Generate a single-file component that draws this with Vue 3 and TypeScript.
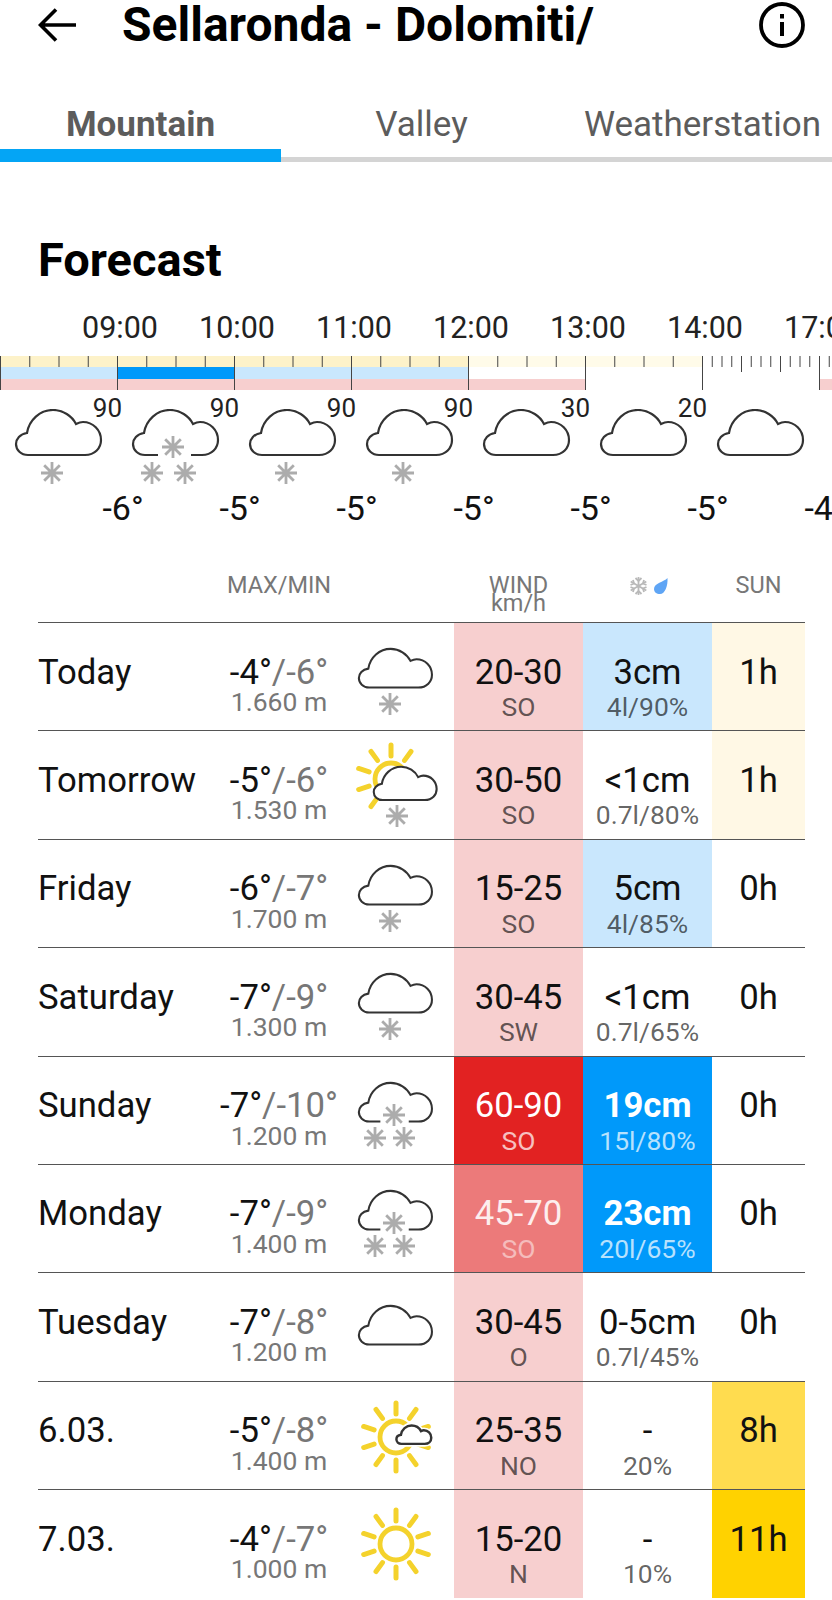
<script setup lang="ts">
type Icon = "snow" | "sun-snow" | "heavy" | "cloud" | "sun-cloud" | "sun";

interface Row {
  day: string;
  max: string;
  min: string;
  alt: string;
  icon: Icon;
  wind: string;
  dir: string;
  windClass: string;
  snow: string;
  rain: string;
  snowClass: string;
  sun: string;
  sunClass: string;
}

const HOUR = 117;

const hours = ["09:00", "10:00", "11:00", "12:00", "13:00", "14:00", "17:00"];
const temps = ["-6°", "-5°", "-5°", "-5°", "-5°", "-5°", "-4°"];
const slots = [
  { pct: "90", flakes: 1 },
  { pct: "90", flakes: 3 },
  { pct: "90", flakes: 1 },
  { pct: "90", flakes: 1 },
  { pct: "30", flakes: 0 },
  { pct: "20", flakes: 0 },
  { pct: "", flakes: 0 },
];

const majors = [0, 1, 2, 3, 4, 5, 6, 7].map((i) => i * HOUR);
const minors: number[] = [];
for (let i = 0; i < 6; i++) {
  for (let k = 1; k < 4; k++) minors.push(i * HOUR + (k * HOUR) / 4);
}
const fine: { x: number; long: boolean }[] = [];
for (let k = 1; k < 14; k++) {
  if (k !== 12) fine.push({ x: 6 * HOUR + (k * HOUR) / 12, long: k % 4 === 0 });
}

function ray(a: number) {
  const r = (a * Math.PI) / 180;
  return {
    x1: 23 * Math.cos(r),
    y1: -23 * Math.sin(r),
    x2: 34 * Math.cos(r),
    y2: -34 * Math.sin(r),
  };
}
const rays = [90, 54, 18, -18, -54, -90, -126, -162, 162, 126].map(ray);
// only the rays that stick out from behind the big cloud
const upperRays = [90, 54, 162, 126, -162, -126].map(ray);

const rows: Row[] = [
  { day: "Today", max: "-4°", min: "-6°", alt: "1.660 m", icon: "snow", wind: "20-30", dir: "SO", windClass: "w-low", snow: "3cm", rain: "4l/90%", snowClass: "s-low", sun: "1h", sunClass: "sun-low" },
  { day: "Tomorrow", max: "-5°", min: "-6°", alt: "1.530 m", icon: "sun-snow", wind: "30-50", dir: "SO", windClass: "w-low", snow: "<1cm", rain: "0.7l/80%", snowClass: "", sun: "1h", sunClass: "sun-low" },
  { day: "Friday", max: "-6°", min: "-7°", alt: "1.700 m", icon: "snow", wind: "15-25", dir: "SO", windClass: "w-low", snow: "5cm", rain: "4l/85%", snowClass: "s-low", sun: "0h", sunClass: "" },
  { day: "Saturday", max: "-7°", min: "-9°", alt: "1.300 m", icon: "snow", wind: "30-45", dir: "SW", windClass: "w-low", snow: "<1cm", rain: "0.7l/65%", snowClass: "", sun: "0h", sunClass: "" },
  { day: "Sunday", max: "-7°", min: "-10°", alt: "1.200 m", icon: "heavy", wind: "60-90", dir: "SO", windClass: "w-high", snow: "19cm", rain: "15l/80%", snowClass: "s-high", sun: "0h", sunClass: "" },
  { day: "Monday", max: "-7°", min: "-9°", alt: "1.400 m", icon: "heavy", wind: "45-70", dir: "SO", windClass: "w-mid", snow: "23cm", rain: "20l/65%", snowClass: "s-high", sun: "0h", sunClass: "" },
  { day: "Tuesday", max: "-7°", min: "-8°", alt: "1.200 m", icon: "cloud", wind: "30-45", dir: "O", windClass: "w-low", snow: "0-5cm", rain: "0.7l/45%", snowClass: "", sun: "0h", sunClass: "" },
  { day: "6.03.", max: "-5°", min: "-8°", alt: "1.400 m", icon: "sun-cloud", wind: "25-35", dir: "NO", windClass: "w-low", snow: "-", rain: "20%", snowClass: "", sun: "8h", sunClass: "sun-mid" },
  { day: "7.03.", max: "-4°", min: "-7°", alt: "1.000 m", icon: "sun", wind: "15-20", dir: "N", windClass: "w-low", snow: "-", rain: "10%", snowClass: "", sun: "11h", sunClass: "sun-high" },
];
</script>

<template>
  <div class="page">
    <svg class="defs" width="0" height="0" aria-hidden="true">
      <defs>
        <path id="cloud" d="M13 46H70C80 46 86 39 86 31C86 21 78 13 68 13C65 13 63 14 61 15C57 7 48 1 38 1C25 1 14 11 12 24C5 25 1 30 1 35C1 41 6 46 13 46Z" />
        <path id="cloud-gap" d="M26 46H13C6 46 1 41 1 35C1 30 5 25 12 24C14 11 25 1 38 1C48 1 57 7 61 15C63 14 65 13 68 13C78 13 86 21 86 31C86 39 80 46 70 46H59" fill="none" />
        <path id="flake" d="M0-11V11M-11 0H11M-7.8-7.8L7.800 7.800M-7.8 7.800L7.800-7.800" fill="none" stroke="#acacac" stroke-width="2.800" />
        <g id="sun-full" fill="none" stroke="#f4d22c" stroke-width="5" stroke-linecap="round">
          <line v-for="(r, i) in rays" :key="i" :x1="r.x1" :y1="r.y1" :x2="r.x2" :y2="r.y2" />
          <circle r="16" stroke-width="4.800" />
        </g>
        <g id="sun-back" fill="none" stroke="#f4d22c" stroke-width="5" stroke-linecap="round">
          <line v-for="(r, i) in upperRays" :key="i" :x1="r.x1" :y1="r.y1" :x2="r.x2" :y2="r.y2" />
          <circle r="16" stroke-width="4.800" />
        </g>
      </defs>
    </svg>

    <header class="topbar">
      <svg class="back" width="38" height="34" viewBox="0 0 38 34" fill="none" stroke="#000" stroke-width="3.600">
        <path d="M38 17H3M18 1.500L2.500 17L18 32.500" />
      </svg>
      <h1 class="title">Sellaronda - Dolomiti/</h1>
      <svg class="info" width="46" height="46" viewBox="0 0 46 46">
        <circle cx="23" cy="23" r="21" fill="none" stroke="#000" stroke-width="3.800" />
        <rect x="21" y="20" width="4" height="14" />
        <rect x="21" y="12" width="4" height="4.500" />
      </svg>
    </header>

    <nav class="tabs">
      <div class="tab active">Mountain</div>
      <div class="tab">Valley</div>
      <div class="tab">Weatherstation</div>
    </nav>

    <h2 class="heading">Forecast</h2>

    <div class="hour-labels">
      <span v-for="h in hours" :key="h" class="hour">{{ h }}</span>
    </div>

    <svg class="ruler" width="832" height="34" viewBox="0 0 832 34">
      <rect x="0" y="0" width="468" height="11" fill="#fdf2c9" />
      <rect x="468" y="0" width="234" height="11" fill="#fffbe9" />
      <rect x="0" y="11" width="468" height="12" fill="#c9e7fd" />
      <rect x="117" y="11" width="117" height="12" fill="#0099fa" />
      <rect x="0" y="23" width="585" height="11" fill="#f7cfcf" />
      <rect x="819" y="23" width="13" height="11" fill="#f7cfcf" />
      <g stroke="#444" stroke-width="1">
        <line v-for="x in minors" :key="x" :x1="x + 0.5" y1="0" :x2="x + 0.5" y2="11" />
        <line v-for="f in fine" :key="f.x" :x1="f.x + 0.5" y1="0" :x2="f.x + 0.5" :y2="f.long ? 16 : 11" />
        <line v-for="x in majors" :key="x" :x1="x + 0.5" y1="0" :x2="x + 0.5" y2="34" />
      </g>
    </svg>

    <div class="slots">
      <div v-for="(s, i) in slots" :key="i" class="slot">
        <span class="pct">{{ s.pct }}</span>
        <svg width="117" height="76" viewBox="0 0 117 76">
          <g transform="translate(12 0)">
            <use :href="s.flakes === 3 ? '#cloud-gap' : '#cloud'" fill="none" stroke="#333" stroke-width="2.200" />
            <template v-if="s.flakes === 1">
              <use href="#flake" transform="translate(37 64)" />
            </template>
            <template v-if="s.flakes === 3">
              <use href="#flake" transform="translate(41 38)" />
              <use href="#flake" transform="translate(20 64)" />
              <use href="#flake" transform="translate(53 64)" />
            </template>
          </g>
        </svg>
      </div>
    </div>

    <div class="temps">
      <span v-for="(t, i) in temps" :key="i" class="temp">{{ t }}</span>
    </div>

    <div class="grid head">
      <div></div>
      <div class="head-cell">MAX/MIN</div>
      <div></div>
      <div class="head-cell wind-head">
        <div>WIND</div>
        <div>km/h</div>
      </div>
      <div class="head-cell">
        <svg width="50" height="22" viewBox="0 0 50 22">
          <g transform="translate(15.500 12)" fill="none" stroke="#b9b9b9" stroke-width="1.800">
            <path d="M0-9V9M-7.800-4.500L7.800 4.500M-7.800 4.500L7.800-4.500" />
            <path d="M-3-8L0-5L3-8M-3 8L0 5L3 8M-8-1L-4.500-2.500L-5.500-6M8-1L4.500-2.500L5.500-6M-8 1L-4.500 2.500L-5.500 6M8 1L4.500 2.500L5.500 6" />
          </g>
          <path d="M44.500 4C41 8 31 9 31 15C31 18 33.500 20 37 20C42 20 45 12 44.500 4Z" fill="#5fa5f5" />
        </svg>
      </div>
      <div class="head-cell">SUN</div>
    </div>

    <div v-for="r in rows" :key="r.day" class="grid row">
      <div class="cell day">{{ r.day }}</div>
      <div class="cell center">
        <div class="big">{{ r.max }}<span class="min">/{{ r.min }}</span></div>
        <div class="alt">{{ r.alt }}</div>
      </div>
      <div class="icon-cell">
        <svg width="99" height="107" viewBox="0 0 99 107">
          <template v-if="r.icon === 'snow'">
            <use href="#cloud" transform="translate(3 25) scale(.86)" fill="none" stroke="#333" stroke-width="2.400" />
            <use href="#flake" transform="translate(35 81)" />
          </template>
          <template v-if="r.icon === 'sun-snow'">
            <use href="#sun-back" transform="translate(36 48)" />
            <use href="#cloud" transform="translate(18 35) scale(.74)" fill="#fff" stroke="#333" stroke-width="2.800" />
            <use href="#flake" transform="translate(42 85)" />
          </template>
          <template v-if="r.icon === 'heavy'">
            <use href="#cloud-gap" transform="translate(3 25) scale(.86)" stroke="#333" stroke-width="2.400" />
            <use href="#flake" transform="translate(39 58)" />
            <use href="#flake" transform="translate(20 81)" />
            <use href="#flake" transform="translate(49 81)" />
          </template>
          <use v-if="r.icon === 'cloud'" href="#cloud" transform="translate(3 32) scale(.86)" fill="none" stroke="#333" stroke-width="2.400" />
          <template v-if="r.icon === 'sun-cloud'">
            <use href="#sun-full" transform="translate(41 55)" />
            <use href="#cloud" transform="translate(41 43) scale(.41)" fill="#fff" stroke="#fff" stroke-width="14" />
            <use href="#cloud" transform="translate(41 43) scale(.41)" fill="#fff" stroke="#333" stroke-width="6" />
          </template>
          <use v-if="r.icon === 'sun'" href="#sun-full" transform="translate(41 54)" />
        </svg>
      </div>
      <div class="cell center" :class="r.windClass">
        <div class="big">{{ r.wind }}</div>
        <div class="sub">{{ r.dir }}</div>
      </div>
      <div class="cell center" :class="r.snowClass">
        <div class="big">{{ r.snow }}</div>
        <div class="sub">{{ r.rain }}</div>
      </div>
      <div class="cell center" :class="r.sunClass">
        <div class="big">{{ r.sun }}</div>
      </div>
    </div>
  </div>
</template>

<style>
html,
body {
  margin: 0;
  background: #fff;
}
</style>

<style scoped>
.page {
  position: relative;
  width: 832px;
  height: 1600px;
  overflow: hidden;
  font-family: Roboto, "Liberation Sans", sans-serif;
  color: #111;
  background: #fff;
}
.defs {
  position: absolute;
}
.topbar {
  display: flex;
  align-items: center;
  height: 50px;
  padding: 0 27px 0 38px;
}
.back {
  flex: none;
  margin-right: 46px;
}
.title {
  flex: 1;
  margin: 0;
  font-size: 48px;
  line-height: 50px;
  font-weight: 700;
  color: #000;
  white-space: nowrap;
}
.tabs {
  display: flex;
  width: 843px;
  height: 112px;
}
.tab {
  flex: 1;
  box-sizing: border-box;
  padding-top: 55px;
  border-bottom: 5px solid #d4d4d4;
  font-size: 35px;
  line-height: 40px;
  text-align: center;
  color: #5c5c5c;
  white-space: nowrap;
}
.tab.active {
  border-bottom: 13px solid #04a5f5;
  font-weight: 700;
}
.heading {
  margin: 0;
  padding: 73px 0 0 38px;
  font-size: 47px;
  line-height: 50px;
  font-weight: 700;
  color: #000;
}
.hour-labels {
  display: flex;
  margin-top: 25px;
  padding-left: 61.5px;
}
.hour,
.temp {
  flex: none;
  width: 117px;
  text-align: center;
  line-height: 36px;
}
.hour {
  font-size: 30.5px;
  color: #222;
}
.ruler {
  display: block;
  margin-top: 10px;
}
.slots {
  display: flex;
  padding-left: 3px;
}
.slot {
  position: relative;
  flex: none;
  width: 117px;
  padding-top: 19px;
}
.slot svg {
  display: block;
}
.pct {
  position: absolute;
  top: 5px;
  right: -2px;
  font-size: 26px;
  line-height: 26px;
  color: #222;
}
.temps {
  display: flex;
  margin-top: 5px;
  padding-left: 64.5px;
}
.temp {
  font-size: 34px;
}
.grid {
  display: grid;
  grid-template-columns: 165px 152px 99px 129px 129px 93px;
  width: 767px;
  margin-left: 38px;
}
.head {
  height: 96px;
  box-sizing: border-box;
  padding-top: 46px;
}
.head-cell {
  font-size: 23.5px;
  line-height: 26px;
  text-align: center;
  color: #777;
}
.head-cell svg {
  display: block;
  margin: 2px auto 0;
}
.wind-head {
  padding-top: 4px;
  line-height: 18px;
}
.row {
  box-sizing: border-box;
  height: 108.4px;
  border-top: 1px solid #555;
}
.cell {
  padding-top: 28.5px;
}
.center {
  text-align: center;
}
.day {
  font-size: 34.7px;
  line-height: 40px;
  color: #111;
  white-space: nowrap;
}
.big {
  font-size: 34.7px;
  line-height: 40px;
  white-space: nowrap;
}
.min {
  color: #777;
}
.alt {
  margin-top: 0.5px;
  font-size: 26.5px;
  line-height: 20px;
  color: #777;
}
.sub {
  margin-top: 3.5px;
  font-size: 26.5px;
  line-height: 24px;
  color: rgba(0, 0, 0, 0.62);
}
.icon-cell svg {
  display: block;
}
.w-low {
  background: #f7cfcf;
}
.w-mid {
  background: #ec7a7a;
  color: #fdeeee;
}
.w-high {
  background: #e22222;
  color: #fff;
}
.w-mid .sub {
  color: rgba(255, 255, 255, 0.5);
}
.w-high .sub {
  color: rgba(255, 255, 255, 0.72);
}
.s-low {
  background: #c9e7fd;
}
.s-high {
  background: #0099fa;
  color: #fff;
}
.s-high .big {
  font-weight: 700;
}
.s-high .sub {
  color: rgba(255, 255, 255, 0.72);
}
.sun-low {
  background: #fff8e5;
}
.sun-mid {
  background: #ffdc4f;
}
.sun-high {
  background: #ffd200;
}
</style>
